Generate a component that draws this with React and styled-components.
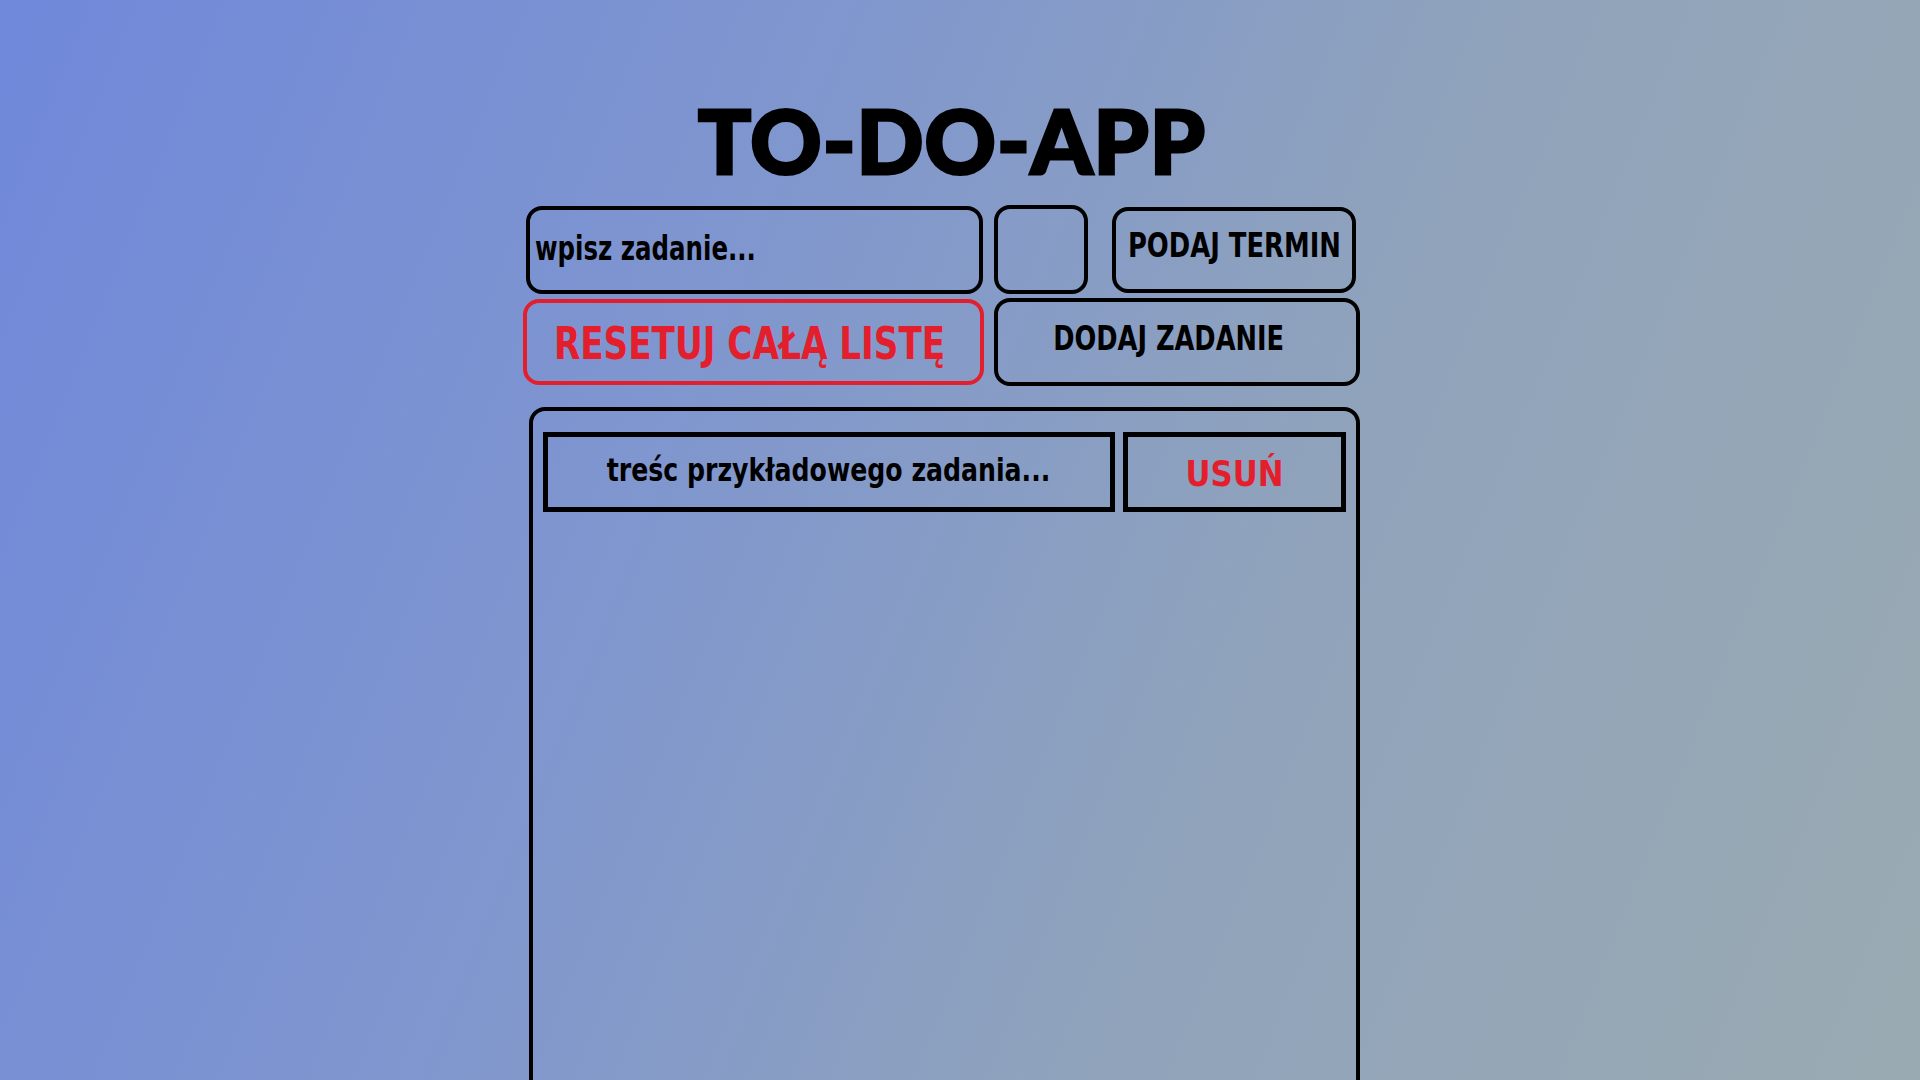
import React from 'react';
import styled, { createGlobalStyle } from 'styled-components';

const GlobalStyle = createGlobalStyle`
  html, body {
    margin: 0;
    padding: 0;
  }
  body {
    font-family: "DejaVu Sans Condensed", "DejaVu Sans", sans-serif;
    background: linear-gradient(112deg, #7088da 0%, #7f96cf 35%, #90a3bb 65%, #9aaab2 100%);
    background-attachment: fixed;
    min-height: 100vh;
    overflow: hidden;
  }
`;

const Page = styled.div`
  min-height: 100vh;
  display: flex;
  flex-direction: column;
  align-items: center;
  padding-right: 37px;
  box-sizing: border-box;
`;

const Title = styled.h1`
  font-family: Lato, "DejaVu Sans", sans-serif;
  font-weight: 900;
  font-size: 88px;
  line-height: 92px;
  letter-spacing: 1px;
  -webkit-text-stroke: 3px #000;
  margin: 94px 0 19px 21px;
  color: #000;
`;

const Controls = styled.div`
  width: 837px;
  display: flex;
  flex-direction: column;
  gap: 4px;
`;

const Row = styled.div`
  display: flex;
  align-items: center;
  padding: 0 ${p => p.right || 0}px 0 ${p => p.left || 0}px;
`;

const Box = styled.div`
  box-sizing: border-box;
  border: 4px solid ${p => p.danger ? '#e41f2d' : '#000'};
  border-radius: 16px;
  height: ${p => p.h || 88}px;
  width: ${p => p.w}px;
  margin-left: ${p => p.gap || 0}px;
  display: flex;
  align-items: center;
  justify-content: center;
  font-weight: 700;
  color: ${p => p.danger ? '#e41f2d' : '#000'};
`;

const Field = styled(Box)`
  justify-content: flex-start;
  padding: 0 5px;
`;

const Label = styled.span`
  display: inline-block;
  white-space: nowrap;
  font-size: ${p => p.size}px;
  transform-origin: ${p => p.origin || 'center'};
  transform: translate(${p => p.dx || 0}px, ${p => p.dy || 0}px) scaleX(${p => p.squeeze || 1});
`;

const List = styled.div`
  box-sizing: border-box;
  width: 831px;
  height: 720px;
  margin: 21px 0 0 6px;
  border: 4px solid #000;
  border-radius: 16px;
  padding: 21px 10px;
  display: flex;
  flex-direction: column;
  gap: 10px;
`;

const Task = styled.div`
  display: flex;
  gap: 8px;
`;

const TaskText = styled.div`
  box-sizing: border-box;
  width: 572px;
  height: 80px;
  border: 5px solid #000;
  display: flex;
  align-items: center;
  justify-content: center;
  font-weight: 700;
  color: #000;
`;

const RemoveButton = styled(TaskText)`
  width: 223px;
  color: #e41f2d;
`;

const App = () => {
  return (
    <>
      <GlobalStyle />
      <Page>
        <Title>TO-DO-APP</Title>
        <Controls>
          <Row left={3} right={4}>
            <Field w={457} h={88}>
              <Label size={34} squeeze={0.8} origin="left center" dy={-2}>wpisz zadanie...</Label>
            </Field>
            <Box w={94} h={89} gap={11} />
            <Box w={244} h={86} gap={24}>
              <Label size={33} squeeze={0.87} dy={-4}>PODAJ TERMIN</Label>
            </Box>
          </Row>
          <Row>
            <Box w={461} h={86} danger>
              <Label size={45} squeeze={0.845} dx={-4} dy={1}>RESETUJ CAŁĄ LISTĘ</Label>
            </Box>
            <Box w={366} h={88} gap={10}>
              <Label size={33} squeeze={0.864} dx={-8} dy={-4}>DODAJ ZADANIE</Label>
            </Box>
          </Row>
        </Controls>
        <List>
          <Task>
            <TaskText>
              <Label size={32} squeeze={0.875} dy={-2}>treśc przykładowego zadania...</Label>
            </TaskText>
            <RemoveButton>
              <Label size={36} squeeze={0.95} dy={1}>USUŃ</Label>
            </RemoveButton>
          </Task>
        </List>
      </Page>
    </>
  );
};

export default App;
